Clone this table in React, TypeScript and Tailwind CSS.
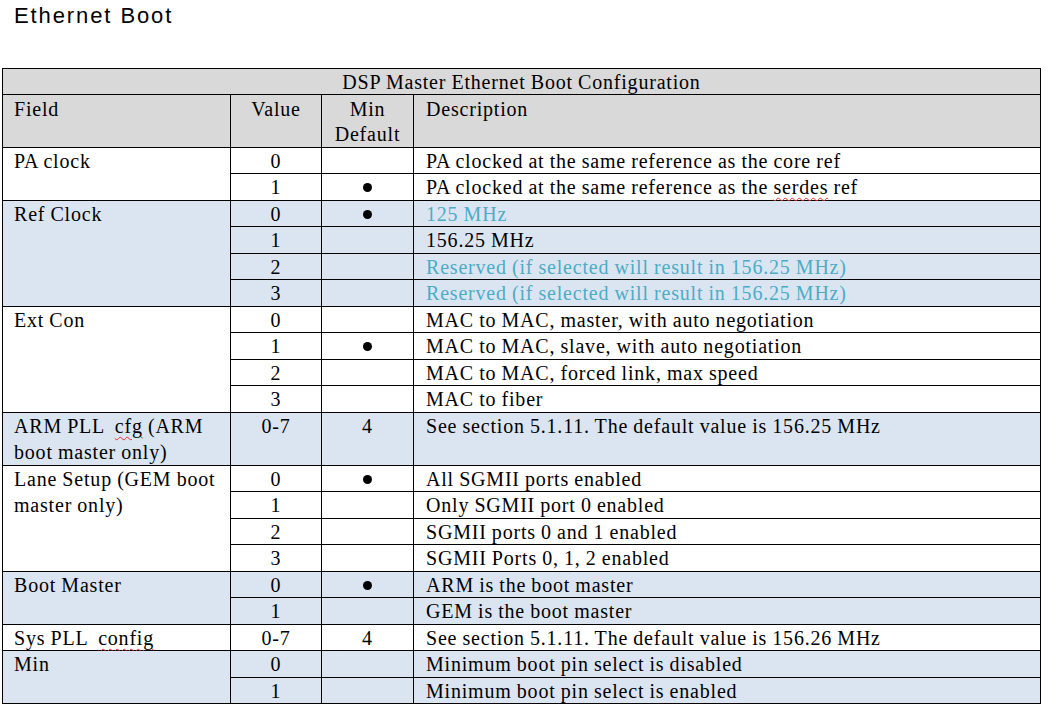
import React from "react";

type Row = { v: string; m: React.ReactNode; d: React.ReactNode; cyan?: boolean; tall?: boolean };
type Group = { field: React.ReactNode; blue: boolean; rows: Row[] };

const Dot = () => (
  <span className="inline-block w-[9px] h-[9px] rounded-full bg-black align-middle mb-[3px]" aria-label="●" />
);
const Wavy = ({ children }: { children: React.ReactNode }) => (
  <span className="underline decoration-wavy decoration-[#e03030] decoration-1 underline-offset-[3px]">{children}</span>
);

const groups: Group[] = [
  {
    field: "PA clock",
    blue: false,
    rows: [
      { v: "0", m: "", d: "PA clocked at the same reference as the core ref" },
      { v: "1", m: <Dot />, d: <>PA clocked at the same reference as the <Wavy>serdes</Wavy> ref</> },
    ],
  },
  {
    field: "Ref Clock",
    blue: true,
    rows: [
      { v: "0", m: <Dot />, d: "125 MHz", cyan: true },
      { v: "1", m: "", d: "156.25 MHz" },
      { v: "2", m: "", d: "Reserved (if selected will result in 156.25 MHz)", cyan: true },
      { v: "3", m: "", d: "Reserved (if selected will result in 156.25 MHz)", cyan: true },
    ],
  },
  {
    field: "Ext Con",
    blue: false,
    rows: [
      { v: "0", m: "", d: "MAC to MAC, master, with auto negotiation" },
      { v: "1", m: <Dot />, d: "MAC to MAC, slave, with auto negotiation" },
      { v: "2", m: "", d: "MAC to MAC, forced link, max speed" },
      { v: "3", m: "", d: "MAC to fiber" },
    ],
  },
  {
    field: <>ARM PLL &nbsp;<Wavy>cfg</Wavy> (ARM boot master only)</>,
    blue: true,
    rows: [{ v: "0-7", m: "4", d: "See section 5.1.11. The default value is 156.25 MHz", tall: true }],
  },
  {
    field: "Lane Setup (GEM boot master only)",
    blue: false,
    rows: [
      { v: "0", m: <Dot />, d: "All SGMII ports enabled" },
      { v: "1", m: "", d: "Only SGMII port 0 enabled" },
      { v: "2", m: "", d: "SGMII ports 0 and 1 enabled" },
      { v: "3", m: "", d: "SGMII Ports 0, 1, 2 enabled" },
    ],
  },
  {
    field: "Boot Master",
    blue: true,
    rows: [
      { v: "0", m: <Dot />, d: "ARM is the boot master" },
      { v: "1", m: "", d: "GEM is the boot master" },
    ],
  },
  {
    field: <>Sys PLL &nbsp;<Wavy>config</Wavy></>,
    blue: false,
    rows: [{ v: "0-7", m: "4", d: "See section 5.1.11. The default value is 156.26 MHz" }],
  },
  {
    field: "Min",
    blue: true,
    rows: [
      { v: "0", m: "", d: "Minimum boot pin select is disabled" },
      { v: "1", m: "", d: "Minimum boot pin select is enabled" },
    ],
  },
];

const spanClass: Record<number, string> = {
  1: "row-span-1",
  2: "row-span-2",
  4: "row-span-4",
};

export default function App() {
  const cells: React.ReactNode[] = [];
  groups.forEach((g, gi) => {
    const bg = g.blue ? "bg-[#dbe5f1]" : "bg-white";
    const units = g.rows.reduce((a, r) => a + (r.tall ? 2 : 1), 0);
    cells.push(
      <div key={`f${gi}`} className={`${spanClass[units]} ${bg} pl-[11px] pr-1 leading-[26px]`}>
        {g.field}
      </div>
    );
    g.rows.forEach((r, ri) => {
      const sp = r.tall ? "row-span-2" : "row-span-1";
      cells.push(
        <div key={`v${gi}-${ri}`} className={`${sp} ${bg} text-center leading-[26px]`}>
          {r.v}
        </div>,
        <div key={`m${gi}-${ri}`} className={`${sp} ${bg} text-center leading-[26px]`}>
          {r.m}
        </div>,
        <div
          key={`d${gi}-${ri}`}
          className={`${sp} ${bg} pl-[12px] leading-[26px] whitespace-nowrap ${r.cyan ? "text-[#4bacc6]" : ""}`}
        >
          {r.d}
        </div>
      );
    });
  });

  return (
    <div className="w-[1056px] h-[708px] bg-white overflow-hidden">
      <div className="pl-[14px] pt-[3px] [font-family:'Liberation_Sans',Arial,sans-serif] text-[22px] leading-[26px] tracking-[1.9px] text-black">
        Ethernet Boot
      </div>
      <div className="ml-[2px] mt-[39px] w-[1039px] [font-family:'Liberation_Serif','Times_New_Roman',serif] text-[20px] tracking-[0.8px] [word-spacing:-0.6px] text-black">
        <div className="grid bg-black p-px gap-px grid-cols-[227px_90px_91px_626px] grid-rows-[25px_52px_25px_26px_25px_26px_25px_26px_25px_26px_25px_26px_25px_26px_25px_26px_25px_26px_25px_26px_25px_26px_25px]">
          <div className="col-span-4 bg-[#d9d9d9] text-center leading-[26px]">
            DSP Master Ethernet Boot Configuration
          </div>
          <div className="bg-[#d9d9d9] pl-[11px] leading-[25px] pt-[2px]">Field</div>
          <div className="bg-[#d9d9d9] text-center leading-[25px] pt-[2px]">Value</div>
          <div className="bg-[#d9d9d9] text-center leading-[25px] pt-[2px]">
            Min
            <br />
            Default
          </div>
          <div className="bg-[#d9d9d9] pl-[12px] leading-[25px] pt-[2px]">Description</div>
          {cells}
        </div>
      </div>
    </div>
  );
}
